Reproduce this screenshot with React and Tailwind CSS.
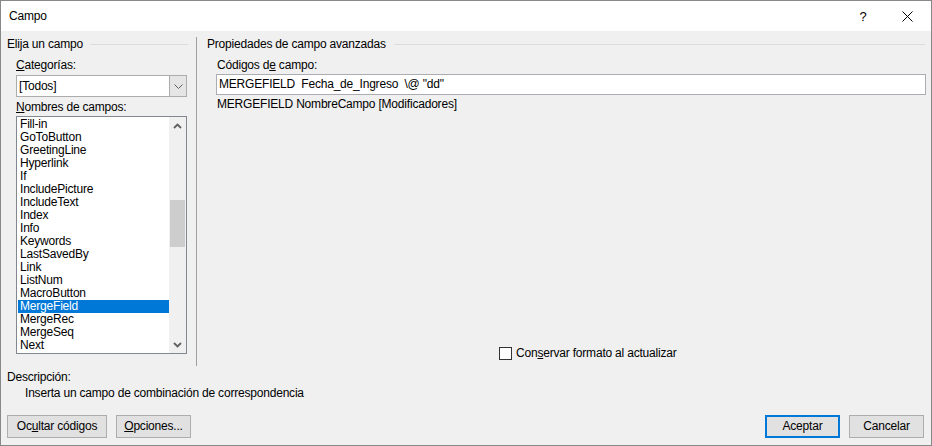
import React from "react";

const items = [
  "Fill-in","GoToButton","GreetingLine","Hyperlink","If","IncludePicture","IncludeText","Index","Info","Keywords","LastSavedBy","Link","ListNum","MacroButton","MergeField","MergeRec","MergeSeq","Next",
];

function Chevron({ up, className }) {
  return (
    <svg width="9" height="6" viewBox="0 0 9 6" className={className}>
      {up ? (
        <path d="M1 5 L4.5 1.5 L8 5" fill="none" stroke="#606060" strokeWidth="1.8" />
      ) : (
        <path d="M1 1 L4.5 4.5 L8 1" fill="none" stroke="#606060" strokeWidth="1.8" />
      )}
    </svg>
  );
}

function Btn({ children, primary, w }) {
  return (
    <div
      className={`${w} h-[23px] flex items-center justify-center bg-[#e1e1e1] ${primary ? "border-2 border-[#0078d7]" : "border border-[#adadad]"}`}
    >
      {children}
    </div>
  );
}

export default function App() {
  return (
    <div
      className="w-[932px] h-[446px] border border-[#888888] bg-[#f0f0f0] flex flex-col text-[12px] leading-[15px] tracking-[-0.2px] text-black overflow-hidden"
      style={{ fontFamily: '"Liberation Sans", Arial, sans-serif' }}
    >
      {/* Title bar */}
      <div className="h-[30px] bg-white flex items-center shrink-0">
        <div className="pl-[8px] flex-1 text-[12px]">Campo</div>
        <div className="w-[12px] text-center mr-[33px] text-[13px]">?</div>
        <svg width="11" height="11" viewBox="0 0 11 11" className="mr-[18px]">
          <path d="M0.5 0.5 L10.5 10.5 M10.5 0.5 L0.5 10.5" stroke="#000" strokeWidth="1" />
        </svg>
      </div>

      {/* Top row */}
      <div className="flex h-[329px] mt-[6px] shrink-0">
        {/* Left column */}
        <div className="ml-[6px] w-[181px] flex flex-col">
          <div className="flex items-center h-[15px]">
            <span>Elija un campo</span>
            <div className="flex-1 h-px bg-[#dcdcdc] ml-[7px]" />
          </div>
          <div className="mt-[6px] h-[15px] pl-[9px]">
            <u>C</u>ategorías:
          </div>
          <div className="mt-[2px] ml-[9px] w-[171px] h-[22px] border border-[#acacac] bg-white flex">
            <div className="flex-1 flex items-center pl-[2px]">[Todos]</div>
            <div className="w-[17px] bg-[#e5e5e5] border-l border-[#acacac] flex items-center justify-center">
              <svg width="9" height="5" viewBox="0 0 9 5">
                <path d="M0.5 0.5 L4.5 4.5 L8.5 0.5" fill="none" stroke="#606060" strokeWidth="1" />
              </svg>
            </div>
          </div>
          <div className="mt-[3px] h-[15px] pl-[9px]">
            <u>N</u>ombres de campos:
          </div>
          <div className="mt-[1px] ml-[9px] w-[171px] h-[238px] border border-[#828790] bg-white flex">
            <div className="flex-1 pt-[1px] pl-[1px]">
              {items.map((it) => (
                <div
                  key={it}
                  className={`h-[13px] leading-[13px] pl-[2px] overflow-hidden ${it === "MergeField" ? "bg-[#0078d7] text-white" : ""}`}
                >
                  {it}
                </div>
              ))}
            </div>
            <div className="w-[17px] bg-[#f0f0f0] flex flex-col">
              <div className="h-[17px] flex items-center justify-center">
                <Chevron up />
              </div>
              <div className="h-[66px]" />
              <div className="h-[47px] mx-[1px] bg-[#cdcdcd]" />
              <div className="flex-1" />
              <div className="h-[17px] flex items-center justify-center">
                <Chevron />
              </div>
            </div>
          </div>
        </div>

        {/* Separator */}
        <div className="ml-[8px] w-px bg-[#a0a0a0]" />

        {/* Right column */}
        <div className="ml-[10px] w-[718px] flex flex-col">
          <div className="flex items-center h-[15px]">
            <span>Propiedades de campo avanzadas</span>
            <div className="flex-1 h-px bg-[#dcdcdc] ml-[8px]" />
          </div>
          <div className="mt-[6px] h-[15px] pl-[10px]">
            Códigos d<u>e</u> campo:
          </div>
          <div className="mt-[1px] ml-[9px] w-[710px] h-[21px] border border-[#abadb3] bg-white flex items-center pl-[2px] whitespace-pre">
            {'MERGEFIELD  Fecha_de_Ingreso  \\@ "dd"'}
          </div>
          <div className="mt-[2px] h-[15px] pl-[10px]">MERGEFIELD NombreCampo [Modificadores]</div>
          <div className="flex-1" />
          <div className="flex items-center h-[13px] ml-[292px] mb-[6px]">
            <div className="w-[13px] h-[13px] border border-[#333333] bg-white" />
            <span className="ml-[4px]">
              Con<u>s</u>ervar formato al actualizar
            </span>
          </div>
        </div>
      </div>

      {/* Description */}
      <div className="mt-[4px] h-[15px] pl-[6px]">Descripción:</div>
      <div className="mt-[1px] h-[15px] pl-[24px]">Inserta un campo de combinación de correspondencia</div>

      {/* Buttons */}
      <div className="mt-[14px] flex pl-[6px] pr-[7px]">
        <Btn w="w-[100px]">
          <span>
            Oc<u>u</u>ltar códigos
          </span>
        </Btn>
        <div className="w-[9px]" />
        <Btn w="w-[75px]">
          <span>
            <u>O</u>pciones...
          </span>
        </Btn>
        <div className="flex-1" />
        <Btn w="w-[75px]" primary>
          Aceptar
        </Btn>
        <div className="w-[9px]" />
        <Btn w="w-[75px]">Cancelar</Btn>
      </div>
    </div>
  );
}
